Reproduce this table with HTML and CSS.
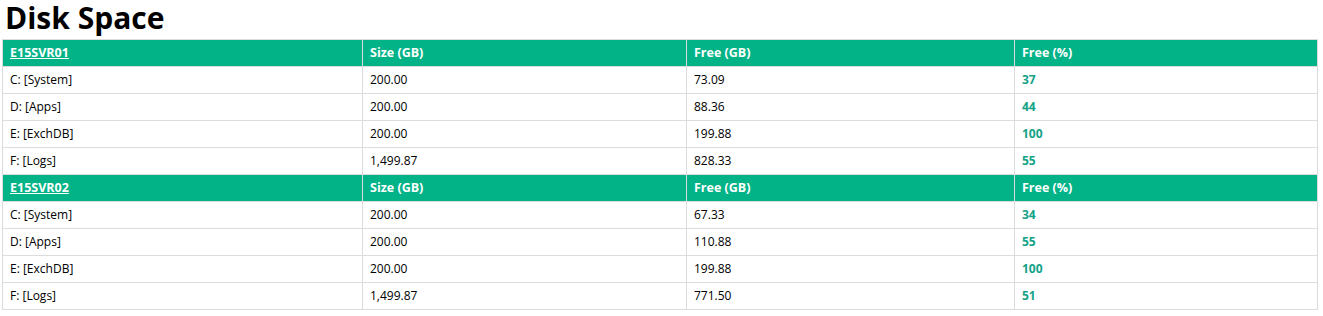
FILE: index.html
```html
<!DOCTYPE html>
<html>
<head>
<meta charset="utf-8">
<link rel="stylesheet" href="styles.css">
</head>
<body>
<h1 class="title">Disk Space</h1>
<table class="disks">
  <colgroup>
    <col class="c1"><col class="c2"><col class="c3"><col class="c4">
  </colgroup>
  <tr class="head">
    <th><a href="#">E15SVR01</a></th><th>Size (GB)</th><th>Free (GB)</th><th>Free (%)</th>
  </tr>
  <tr><td>C: [System]</td><td>200.00</td><td>73.09</td><td class="pct">37</td></tr>
  <tr><td>D: [Apps]</td><td>200.00</td><td>88.36</td><td class="pct">44</td></tr>
  <tr><td>E: [ExchDB]</td><td>200.00</td><td>199.88</td><td class="pct">100</td></tr>
  <tr><td>F: [Logs]</td><td>1,499.87</td><td>828.33</td><td class="pct">55</td></tr>
  <tr class="head">
    <th><a href="#">E15SVR02</a></th><th>Size (GB)</th><th>Free (GB)</th><th>Free (%)</th>
  </tr>
  <tr><td>C: [System]</td><td>200.00</td><td>67.33</td><td class="pct">34</td></tr>
  <tr><td>D: [Apps]</td><td>200.00</td><td>110.88</td><td class="pct">55</td></tr>
  <tr><td>E: [ExchDB]</td><td>200.00</td><td>199.88</td><td class="pct">100</td></tr>
  <tr><td>F: [Logs]</td><td>1,499.87</td><td>771.50</td><td class="pct">51</td></tr>
</table>
</body>
</html>
```

FILE: styles.css
```css
html, body {
  margin: 0;
  padding: 0;
  background: #fff;
}
body {
  padding: 0 6px 0 2px;
  font-family: "Open Sans", "Noto Sans", sans-serif;
  color: #000;
}
.title {
  margin: 0 0 0 3px;
  padding-bottom: 3px;
  font-size: 30px;
  line-height: 36px;
  font-weight: 700;
}
.disks {
  width: 1315px;
  border-collapse: collapse;
  table-layout: fixed;
  font-size: 12px;
}
.c1 { width: 360px; }
.c2 { width: 324px; }
.c3 { width: 328px; }
.c4 { width: 303px; }
.disks th, .disks td {
  border: 1px solid #dcdcdc;
  padding: 0 7px;
  height: 26px;
  line-height: 16px;
  text-align: left;
  vertical-align: middle;
  white-space: nowrap;
}
.disks td {
  font-size: 12px;
}
.head th {
  background: #02b388;
  color: #fff;
  font-size: 12.5px;
  font-weight: 700;
}
.head th a {
  color: #fff;
  text-decoration: underline;
}
.pct {
  color: #14a287;
  font-weight: 700;
}
```
